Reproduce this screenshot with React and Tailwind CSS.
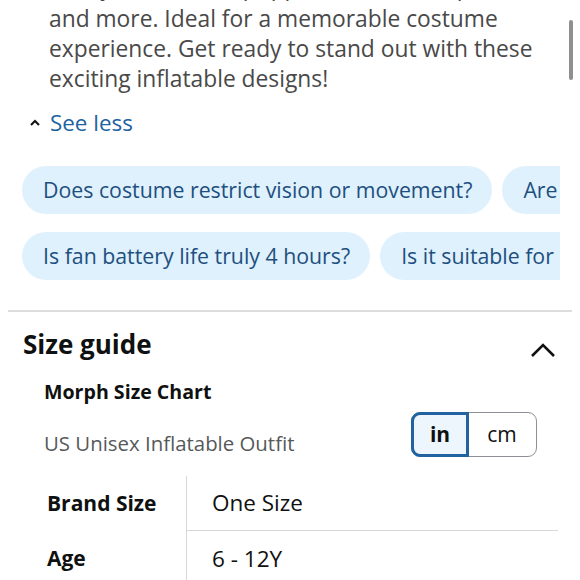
import React from "react";

const font = { fontFamily: '"Open Sans", "Noto Sans", Arial, sans-serif' };

function Chip({ children }) {
  return (
    <div className="shrink-0 h-[48px] flex items-center rounded-full bg-[#dff1fc] pl-[21px] pr-[20px] text-[21.3px] text-[#1e4f7f] whitespace-nowrap">
      {children}
    </div>
  );
}

export default function App() {
  return (
    <div
      className="relative w-[580px] h-[580px] overflow-hidden bg-white text-[#0f1111]"
      style={font}
    >
      {/* scrollbar thumb */}
      <div className="absolute right-[7px] top-[20px] w-[4px] h-[60px] rounded-full bg-[#8f8f8f]" />

      <p className="mt-[-28px] pl-[49px] text-[22.8px] leading-[30px] text-[#494949] whitespace-nowrap">
        <span className="block mb-[2px]">
          with yetis, sharks, puppies, unicorns, apes,
        </span>
        and more. Ideal for a memorable costume
        <br />
        experience. Get ready to stand out with these
        <br />
        exciting inflatable designs!
      </p>

      <div className="mt-[14px] flex items-center h-[30px] pl-[28px]">
        <svg width="14" height="14" viewBox="0 0 14 14" className="mr-[8px]">
          <path d="M3 9 L7 5 L11 9" fill="none" stroke="#111" strokeWidth="2" />
        </svg>
        <span className="text-[22.4px] text-[#2162a1]">See less</span>
      </div>

      <div className="mt-[28px] w-[560px] overflow-hidden pl-[22px] flex flex-col gap-[18px]">
        <div className="flex gap-[10px]">
          <Chip>Does costume restrict vision or movement?</Chip>
          <Chip>Are there different sizes available?</Chip>
        </div>
        <div className="flex gap-[10px]">
          <Chip>Is fan battery life truly 4 hours?</Chip>
          <Chip>Is it suitable for adults?</Chip>
        </div>
      </div>

      <div className="mt-[30px] mx-[8px] h-[2px] bg-[#dddddd]" />

      <div className="mt-[16px] pl-[23px] pr-[24px] flex items-center justify-between h-[32px]">
        <h2 className="text-[26px] font-bold">Size guide</h2>
        <svg width="26" height="16" viewBox="0 0 26 16" className="mt-[12px]">
          <path d="M2 14 L13 3 L24 14" fill="none" stroke="#111" strokeWidth="2.6" />
        </svg>
      </div>

      <div className="mt-[18px] pl-[44px] text-[19.6px] font-bold leading-[28px]">
        Morph Size Chart
      </div>

      <div className="mt-[6px] pl-[44px] pr-[43px] flex items-end justify-between">
        <span className="text-[20.4px] leading-[28px] text-[#565959]">
          US Unisex Inflatable Outfit
        </span>
        <div className="flex h-[45px] w-[126px] rounded-[9px] border border-[#8d9096]">
          <div className="w-[58px] -m-px flex items-center justify-center rounded-l-[9px] border-[3px] border-[#2162a1] bg-[#edf6fd] text-[21px] font-bold">
            in
          </div>
          <div className="flex-1 flex items-center justify-center text-[21px]">
            cm
          </div>
        </div>
      </div>

      <div className="mt-[19px] ml-[23px] w-[535px] flex">
        <div className="w-[164px] shrink-0 border-r border-[#d5d9d9]">
          <div className="h-[55px] pl-[24px] flex items-center text-[21px] font-bold">
            Brand Size
          </div>
          <div className="h-[56px] pl-[24px] flex items-center text-[21px] font-bold">
            Age
          </div>
        </div>
        <div className="flex-1">
          <div className="h-[55px] pl-[25px] flex items-center text-[22.5px] border-b border-[#d5d9d9]">
            One Size
          </div>
          <div className="h-[56px] pl-[25px] flex items-center text-[22.5px]">
            6 - 12Y
          </div>
        </div>
      </div>
    </div>
  );
}
